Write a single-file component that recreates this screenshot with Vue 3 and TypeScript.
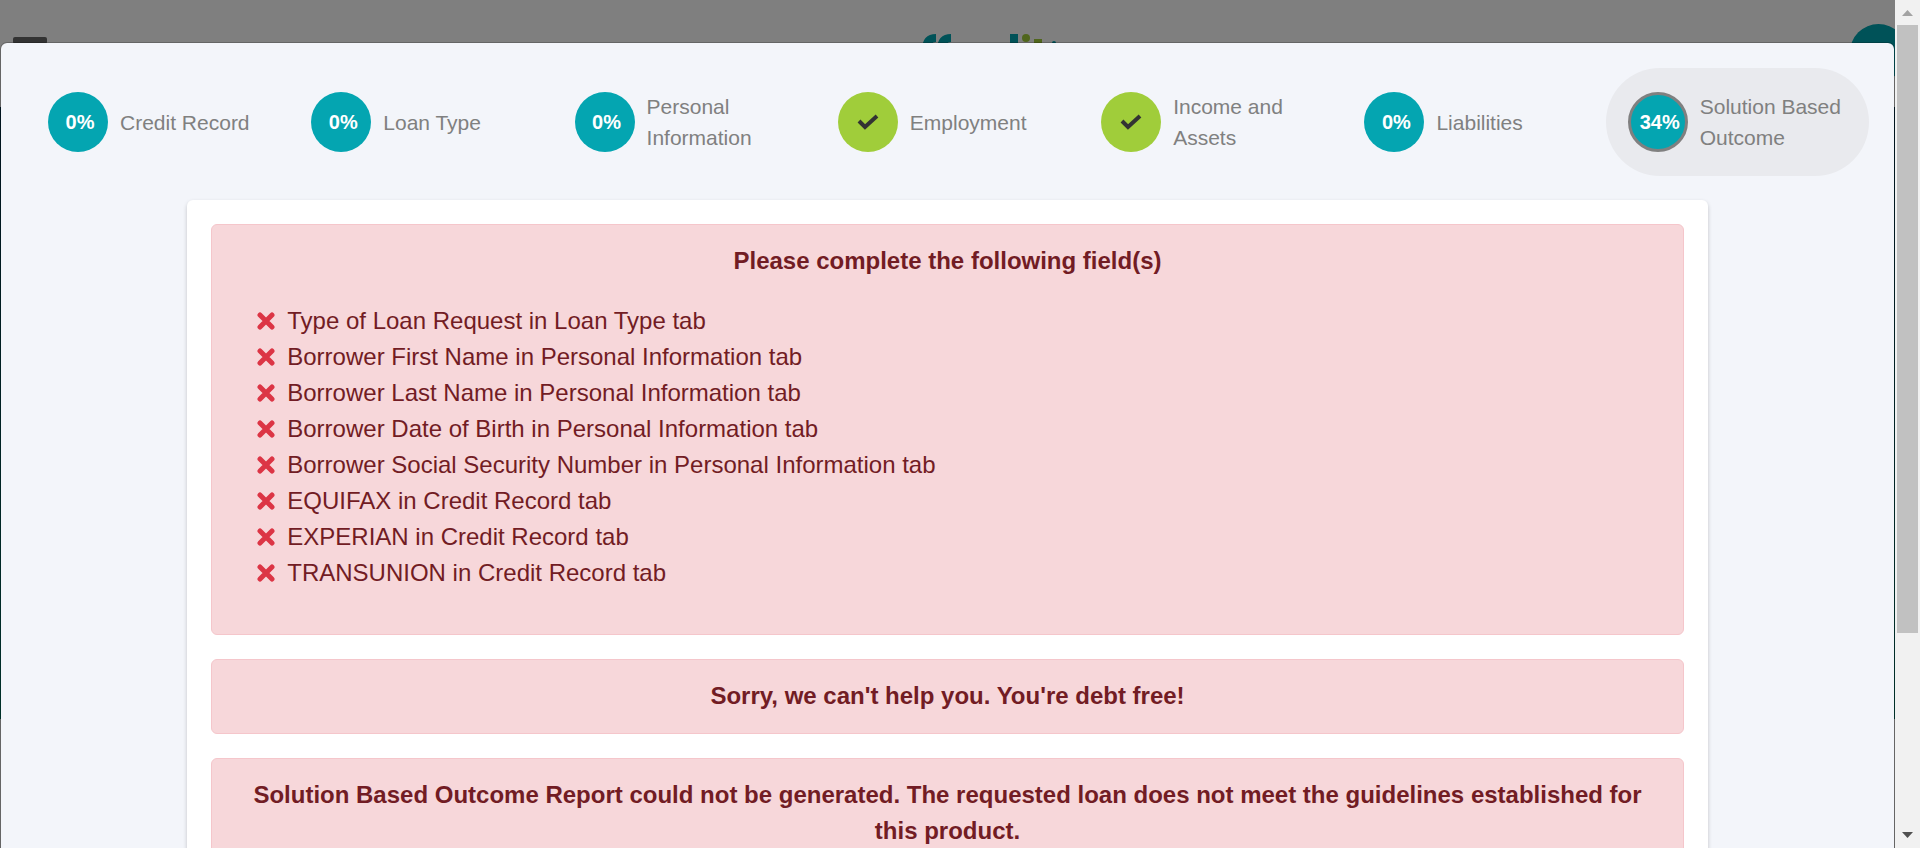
<script setup lang="ts">
interface Step {
  label: string
  percent: number
  done?: boolean
  active?: boolean
}

const steps: Step[] = [
  { label: 'Credit Record', percent: 0 },
  { label: 'Loan Type', percent: 0 },
  { label: 'Personal Information', percent: 0 },
  { label: 'Employment', percent: 100, done: true },
  { label: 'Income and Assets', percent: 100, done: true },
  { label: 'Liabilities', percent: 0 },
  { label: 'Solution Based Outcome', percent: 34, active: true },
]

const missingFields: string[] = [
  'Type of Loan Request in Loan Type tab',
  'Borrower First Name in Personal Information tab',
  'Borrower Last Name in Personal Information tab',
  'Borrower Date of Birth in Personal Information tab',
  'Borrower Social Security Number in Personal Information tab',
  'EQUIFAX in Credit Record tab',
  'EXPERIAN in Credit Record tab',
  'TRANSUNION in Credit Record tab',
]
</script>

<template>
  <div class="window">
    <div class="viewport">
      <div class="page" aria-hidden="true">
        <header class="topbar">
          <span class="menu-icon"></span>
          <svg class="logo" width="220" height="36" viewBox="-70 0 220 36">
            <g fill="none" stroke="#00a4b0" stroke-width="8">
              <path d="M17 36V16Q17 4 27 4M32 36V16Q32 4 42 4" />
              <path d="M105 0V36" />
            </g>
            <path d="M10 12H27M25 12H42" stroke="#00a4b0" stroke-width="6" />
            <circle cx="117" cy="4" r="4" fill="#a0cd3a" />
            <path d="M117 11V36M129 5V36" stroke="#a0cd3a" stroke-width="8" />
            <circle cx="145" cy="9" r="2" fill="#00a4b0" />
          </svg>
          <span class="avatar"></span>
        </header>
        <div class="hero"></div>
      </div>

      <div class="backdrop">
        <main class="dialog" role="dialog" aria-label="Solution Based Outcome">
          <nav class="steps" aria-label="Application steps">
            <button
              v-for="step in steps"
              :key="step.label"
              type="button"
              class="step"
              :class="{ active: step.active }"
            >
              <span class="badge" :class="{ done: step.done }">
                <svg v-if="step.done" width="22" height="16" viewBox="0 0 22 16" aria-hidden="true">
                  <path d="M2 7L8 13L20 2" fill="none" stroke="#333" stroke-width="4" />
                </svg>
                <template v-else>{{ step.percent }}%</template>
              </span>
              <span class="label">{{ step.label }}</span>
            </button>
          </nav>

          <section class="card">
            <div class="alert">
              <h2>Please complete the following field(s)</h2>
              <ul>
                <li v-for="field in missingFields" :key="field">
                  <svg width="18" height="18" viewBox="0 0 18 18" aria-hidden="true">
                    <path
                      d="M3 3L15 15M15 3L3 15"
                      stroke="#dc3545"
                      stroke-width="5"
                      stroke-linecap="round"
                    />
                  </svg>
                  <span>{{ field }}</span>
                </li>
              </ul>
            </div>
            <div class="alert"><h2>Sorry, we can't help you. You're debt free!</h2></div>
            <div class="alert">
              <h2>
                Solution Based Outcome Report could not be generated. The requested loan does not
                meet the guidelines established for this product.
              </h2>
            </div>
          </section>
        </main>
      </div>
    </div>

    <div class="scrollbar" aria-hidden="true">
      <svg width="25" height="25" viewBox="0 0 25 25"><path d="M7 16L12.500 10L18 16Z" fill="#a3a3a3" /></svg>
      <div class="track"><div class="thumb"></div></div>
      <svg width="25" height="25" viewBox="0 0 25 25"><path d="M7 9L12.500 15L18 9Z" fill="#505050" /></svg>
    </div>
  </div>
</template>

<style>
body {
  overflow: hidden;
}
</style>

<style scoped>
* {
  box-sizing: border-box;
}
.window {
  display: flex;
  height: 100vh;
  overflow: hidden;
  font-family: Arial, 'Liberation Sans', sans-serif;
}
.viewport {
  position: relative;
  flex: 1;
  min-width: 0;
  overflow: hidden;
  background: #fff;
}
.topbar {
  display: flex;
  justify-content: space-between;
  align-items: flex-start;
  height: 107px;
  padding: 24px 0 0 13px;
}
.menu-icon {
  width: 34px;
  height: 7px;
  margin-top: 13px;
  border-radius: 2px;
  background: #666;
}
.logo {
  margin-top: 10px;
}
.avatar {
  width: 57px;
  height: 57px;
  margin-right: -12px;
  border-radius: 50%;
  background: #00a4b0;
}
.hero {
  height: 612px;
  background: linear-gradient(#00304a, #007a68);
}
.backdrop {
  position: absolute;
  inset: 0;
  padding-top: 42px;
  background: rgba(0, 0, 0, 0.5);
}
.dialog {
  min-height: 100%;
  padding: 25px;
  border: 1px solid rgba(0, 0, 0, 0.2);
  border-radius: 7px;
  background: #f3f5fa;
  background-clip: padding-box;
}
.steps {
  display: grid;
  grid-template-columns: repeat(7, 1fr);
}
.step {
  display: flex;
  align-items: center;
  gap: 12px;
  height: 108px;
  padding: 0 22px;
  border: 0;
  border-radius: 54px;
  background: none;
  color: #808080;
  font: 21px/31px Arial, 'Liberation Sans', sans-serif;
  text-align: left;
}
.step.active {
  background: #e9eaee;
}
.badge {
  display: flex;
  flex: none;
  align-items: center;
  justify-content: center;
  width: 60px;
  height: 60px;
  padding-left: 4px;
  border-radius: 50%;
  background: #04a5b1;
  color: #fff;
  font-size: 20px;
  font-weight: 700;
}
.badge.done {
  padding-left: 0;
  background: #a0cd3a;
}
.step.active .badge {
  border: 3px solid #808080;
}
.card {
  display: flex;
  flex-direction: column;
  gap: 24px;
  width: 82.5%;
  margin: 24px auto 0;
  padding: 24px;
  border-radius: 6px;
  background: #fff;
  box-shadow: 0 2px 4px rgba(0, 0, 0, 0.2);
}
.alert {
  padding: 18px 36px 19px;
  border: 1px solid #f5c6cb;
  border-radius: 6px;
  background: #f7d7da;
  color: #721c24;
  font-size: 24px;
  line-height: 36px;
}
.alert h2 {
  margin: 0;
  font-size: 24px;
  font-weight: 700;
  text-align: center;
}
ul {
  margin: 24px 0;
  padding: 0 0 0 9px;
  list-style: none;
}
li {
  display: flex;
  align-items: center;
  gap: 12px;
}
.scrollbar {
  display: flex;
  flex-direction: column;
  flex: none;
  width: 25px;
  background: #f1f1f1;
}
.track {
  flex: 1;
  padding: 0 2px;
}
.thumb {
  height: 76.2%;
  background: #c1c1c1;
}
</style>
